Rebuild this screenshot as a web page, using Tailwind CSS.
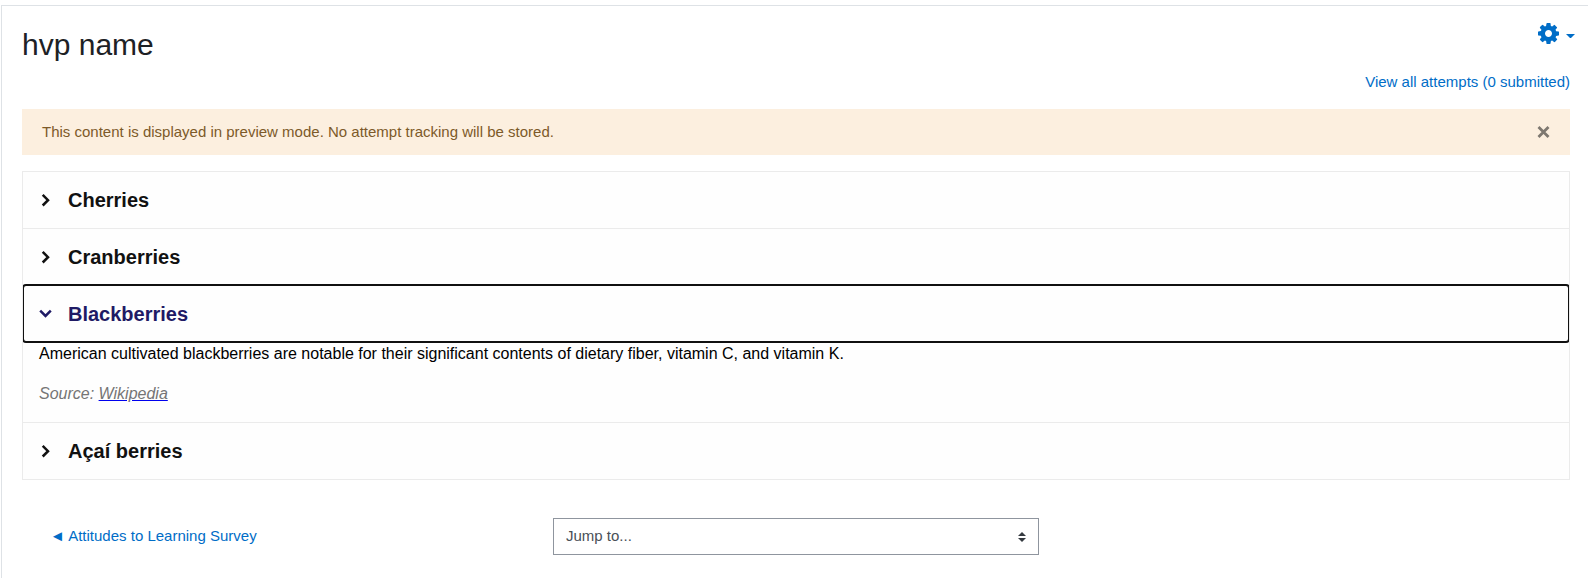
<!DOCTYPE html>
<html lang="en">
  <head>
    <meta charset="UTF-8" />
    <meta name="viewport" content="width=device-width, initial-scale=1.0" />
    <title>hvp name</title>
    <script src="https://cdn.jsdelivr.net/npm/@tailwindcss/browser@4"></script>
  </head>

  <body class="bg-white pt-[5px] pl-px font-['Liberation_Sans',Arial,sans-serif] text-[15px] leading-[22px] text-[#1d2125]">
    <main class="min-h-[calc(100vh-5px)] border-t border-l border-[#dee2e6] pt-[21px] pr-[18px] pl-5">
      <!-- Header -->
      <header class="flex items-start justify-between">
        <h1 class="text-3xl leading-[36px]">hvp name</h1>
        <button type="button" aria-label="Actions menu" class="-mr-[5px] -mt-1 flex items-center gap-[7px]">
          <svg class="size-[21px]" viewBox="0 128 1536 1536" fill="#006dc7">
            <path d="M1024 896q0-106-75-181t-181-75-181 75-75 181 75 181 181 75 181-75 75-181zm512-109v222q0 12-8 23t-20 13l-185 28q-19 54-39 91 35 50 107 138 10 12 10 25t-9 23q-27 37-99 108t-94 71q-12 0-26-9l-138-108q-44 23-91 38-16 136-29 186-7 28-36 28h-222q-14 0-24.500-8.500t-11.500-21.500l-28-184q-49-16-90-37l-141 107q-10 9-25 9-14 0-25-11-126-114-165-168-7-10-7-23 0-12 8-23 15-21 51-66.500t54-70.500q-27-50-41-99l-183-27q-13-2-21-12.500t-8-23.500v-222q0-12 8-23t19-13l186-28q14-46 39-92-40-57-107-138-10-12-10-24 0-10 9-23 26-36 98.500-107.500t94.500-71.500q13 0 26 10l138 107q44-23 91-38 16-136 29-186 7-28 36-28h222q14 0 24.500 8.500t11.500 21.500l28 184q49 16 90 37l142-107q9-9 24-9 13 0 25 10 129 119 165 170 7 8 7 22 0 12-8 23-15 21-51 66.500t-54 70.500q26 50 41 98l183 28q13 2 21 12.500t8 23.500z" />
          </svg>
          <svg class="mt-1 h-1 w-[9px]" viewBox="0 0 9 4" fill="#006dc7"><path d="M0 0h9L4.500 4.500z" /></svg>
        </button>
      </header>

      <div class="mt-2 text-right">
        <a href="#" class="text-[#006dc7]">View all attempts (0 submitted)</a>
      </div>

      <!-- Preview notice -->
      <div role="alert" class="mt-4 flex items-center justify-between bg-[#fcefdf] px-5 py-3 text-[#7d5a29]">
        <p>This content is displayed in preview mode. No attempt tracking will be stored.</p>
        <button type="button" aria-label="Close">
          <svg class="size-[13px]" viewBox="0 0 13 13" fill="none" stroke="#7e7870" stroke-width="2.800"><path d="M1.500 1l10 10M11.500 1l-10 10" /></svg>
        </button>
      </div>

      <!-- Accordion -->
      <section class="mt-4 overflow-hidden border border-[#ebebeb] bg-[#fefefe] text-base text-black">
        <h2>
          <button type="button" aria-expanded="false" class="flex h-14 w-full items-center gap-4 px-4 text-xl font-bold text-[#111]">
            <svg class="size-[13px]" viewBox="0 0 13 13" fill="none" stroke="currentColor" stroke-width="2.500"><path d="M3.700 .9l5.300 5.300-5.300 5.300" /></svg>
            Cherries
          </button>
        </h2>
        <h2>
          <button type="button" aria-expanded="false" class="flex h-[57px] w-full items-center gap-4 border-t border-[#ebebeb] px-4 text-xl font-bold text-[#111]">
            <svg class="size-[13px]" viewBox="0 0 13 13" fill="none" stroke="currentColor" stroke-width="2.500"><path d="M3.700 .9l5.300 5.300-5.300 5.300" /></svg>
            Cranberries
          </button>
        </h2>
        <h2>
          <button type="button" aria-expanded="true" aria-controls="blackberries" class="flex h-[57px] w-full items-center gap-4 rounded-[3px] border-t border-[#ebebeb] px-4 text-xl font-bold text-[#1f1a65] outline-2 -outline-offset-1 outline-[#101010]">
            <svg class="size-[13px]" viewBox="0 0 13 13" fill="none" stroke="currentColor" stroke-width="2.500"><path d="M1.200 2.700l5.300 5.300 5.300-5.300" /></svg>
            Blackberries
          </button>
        </h2>
        <div id="blackberries" class="px-4 pb-4">
          <p>American cultivated blackberries are notable for their significant contents of dietary fiber, vitamin C, and vitamin K.</p>
          <p class="mt-4 italic text-[#757575]">Source: <a href="#" class="underline decoration-[#0000ee]">Wikipedia</a></p>
        </div>
        <h2>
          <button type="button" aria-expanded="false" class="flex h-[57px] w-full items-center gap-4 border-t border-[#ebebeb] px-4 text-xl font-bold text-[#111]">
            <svg class="size-[13px]" viewBox="0 0 13 13" fill="none" stroke="currentColor" stroke-width="2.500"><path d="M3.700 .9l5.300 5.300-5.300 5.300" /></svg>
            Açaí berries
          </button>
        </h2>
      </section>

      <!-- Activity navigation -->
      <nav class="mt-[38px] grid grid-cols-3 items-center">
        <div class="px-7 pb-0.5">
          <a href="#" class="text-[#006dc7]">◄ Attitudes to Learning Survey</a>
        </div>
        <div class="relative px-[15px]">
          <select aria-label="Jump to..." class="block h-[37px] w-full appearance-none border border-[#8f959e] bg-white px-3 pb-0.5 text-[#495057]">
            <option>Jump to...</option>
          </select>
          <svg class="pointer-events-none absolute top-1/2 right-7 h-[10px] w-2 -translate-y-1/2" viewBox="0 0 4 5" fill="#343a40"><path d="M2 0L0 2h4zm0 5L0 3h4z" /></svg>
        </div>
      </nav>
    </main>
  </body>
</html>
